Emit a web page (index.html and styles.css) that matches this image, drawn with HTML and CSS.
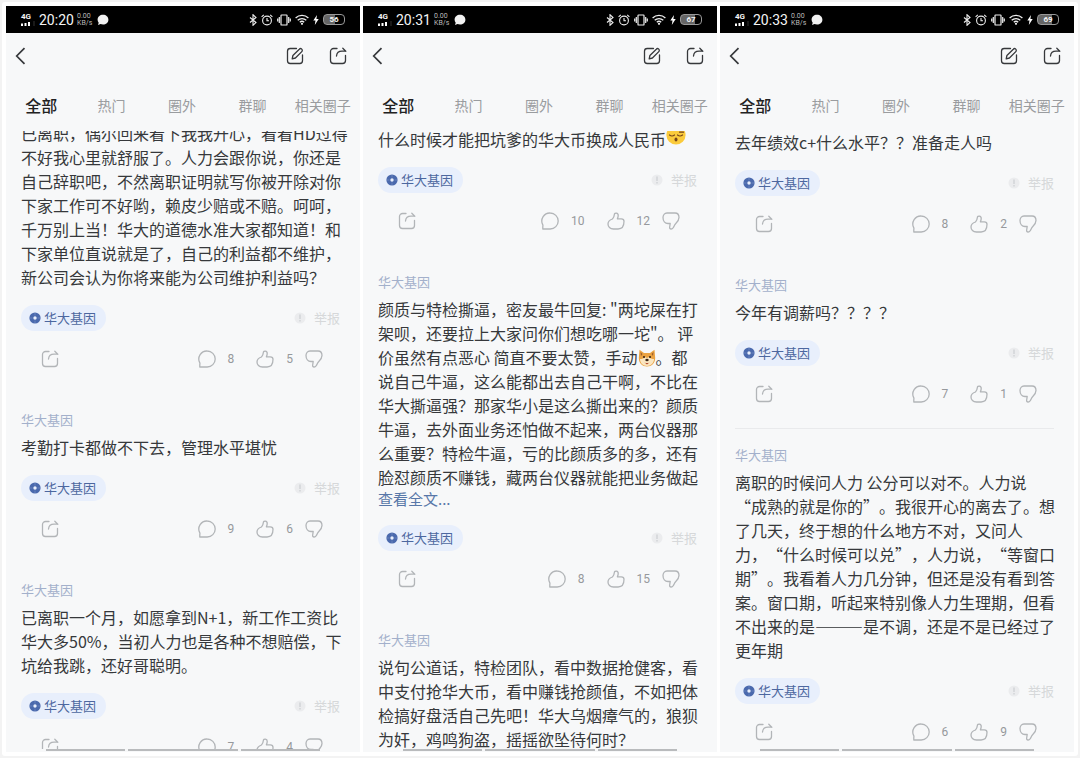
FILE: index.html
```html
<!DOCTYPE html>
<html lang="zh-CN">
<head>
<meta charset="utf-8">
<meta name="viewport" content="width=device-width, initial-scale=1">
<title>华大基因</title>
<link rel="stylesheet" href="styles.css">
</head>
<body>
<svg class="sprite" aria-hidden="true">
  <symbol id="i-signal" viewBox="0 0 14 5"><path d="M0 2.5h2V5H0zM3.5 2h2v3h-2zM7 1h2v4H7z" fill="#fff"/><path d="M12.5 0h1v5h-1z" fill="#333"/></symbol>
  <symbol id="i-bubble" viewBox="0 0 12 12"><path d="M6 .8c3 0 5.4 2.100 5.400 4.900S9 10.600 6 10.600c-.9 0-1.800-.2-2.500-.5L1 11l.7-2.300A4.700 4.700 0 0 1 .6 5.700C.6 2.900 3 .8 6 .8z" fill="#f2f2f2"/></symbol>
  <symbol id="i-bt" viewBox="0 0 8 12"><path d="M1 3.500l6 5L4 11.300V.7L7 3.500l-6 5" fill="none" stroke="#eee" stroke-width="1.100"/></symbol>
  <symbol id="i-alarm" viewBox="0 0 12 12"><g fill="none" stroke="#eee" stroke-width="1.100"><circle cx="6" cy="6.500" r="4.400"/><path d="M6 4v2.700h2M.6 2.800L2.800.8M11.400 2.800L9.200.8"/></g></symbol>
  <symbol id="i-vibrate" viewBox="0 0 14 12"><g fill="none" stroke="#eee" stroke-width="1.200"><rect x="4" y="1" width="6" height="10" rx=".6"/><path d="M2.300 3v6M.7 4.500v3M11.700 3v6M13.300 4.500v3"/></g></symbol>
  <symbol id="i-wifi" viewBox="0 0 14 11"><g fill="none" stroke="#eee" stroke-width="1.300"><path d="M.6 4a9.200 9.200 0 0 1 12.800 0M2.700 6.300a6.200 6.200 0 0 1 8.600 0M4.800 8.300a3.200 3.200 0 0 1 4.400 0"/></g><circle cx="7" cy="9.800" r="1.100" fill="#eee"/></symbol>
  <symbol id="i-bolt" viewBox="0 0 6 10"><path d="M4 0L.3 5.500h2.200L1.800 10l3.900-6H3.400z" fill="#fff"/></symbol>
  <symbol id="i-back" viewBox="0 0 11 18"><path d="M9.500 1.200L1.700 9l7.800 7.800" fill="none" stroke="currentColor" stroke-width="1.700"/></symbol>
  <symbol id="i-edit" viewBox="0 0 18 18"><g fill="none" stroke="currentColor" stroke-width="1.300" stroke-linecap="round" stroke-linejoin="round"><path d="M10.500 1.500H4.200a2.700 2.700 0 0 0-2.700 2.700v9.600a2.700 2.700 0 0 0 2.700 2.700h9.600a2.700 2.700 0 0 0 2.700-2.700V8"/><path d="M6.200 11.800l.7-3.300 6.400-6.300a1.700 1.700 0 0 1 2.500 2.400L9.400 11z"/></g></symbol>
  <symbol id="i-share" viewBox="0 0 18 18"><g fill="none" stroke="currentColor" stroke-width="1.300" stroke-linecap="round" stroke-linejoin="round"><path d="M8 1.500H4.500a3 3 0 0 0-3 3v9a3 3 0 0 0 3 3h9a3 3 0 0 0 3-3V8.500"/><path d="M7.500 9c.3-3 2.300-4.800 5.500-4.800h3.500M13.800 1.300l3 2.900"/></g></symbol>
  <symbol id="i-comment" viewBox="0 0 18 18"><path d="M9.200 1a8 8 0 1 1 0 16H1.800V14.500c.2-.6.3-.9-.1-1.900A8 8 0 0 1 9.200 1z" fill="none" stroke="currentColor" stroke-width="1.300" stroke-linejoin="round"/></symbol>
  <symbol id="i-up" viewBox="0 0 18 18"><path d="M5.400 7C6.800 5.600 7.200 4.200 7.300 2.700c.2-2.400 4-2.200 3.900.7 0 1.300-.4 2.400-.8 3.400h3.900c1.700 0 2.700 1 2.700 2.500 0 4.500-1.900 7.700-5.900 7.700H6.500C3 17 1 14.900 1 12c0-2.500 1.800-4 4.400-5z" fill="none" stroke="currentColor" stroke-width="1.300" stroke-linejoin="round"/></symbol>
  <symbol id="i-down" viewBox="0 0 18 18"><path d="M5 1h8c2.600 0 4 2 4 4.500 0 3-1.600 4.600-3.400 6.200-1 1-1.700 3-2.600 4.300-1 1.500-3.600 1.300-3.400-.5l.6-4H6C3 11.500 1 9 1 5.500 1 3 2.600 1 5 1z" fill="none" stroke="currentColor" stroke-width="1.300" stroke-linejoin="round"/></symbol>
  <symbol id="i-tag" viewBox="0 0 12 12"><circle cx="6" cy="6" r="5.600" fill="#4a69ad"/><circle cx="6" cy="6" r="1.700" fill="#e9effc"/><path d="M6 1v2.500M6 8.500V11M1 6h2.500M8.500 6H11" stroke="#6f89c0" stroke-width=".8"/></symbol>
  <symbol id="i-warn" viewBox="0 0 12 12"><circle cx="6" cy="6" r="5.500" fill="#ebecee"/><path d="M6 2.500v4.500M6 8v1.500" stroke="#d2d4d7" stroke-width="1.500"/></symbol>
  <symbol id="i-sleepy" viewBox="0 0 20 20"><circle cx="10" cy="10" r="9.600" fill="#fbcb3c"/><path d="M3.500 10q2.500 2 5 0M11.500 10q2.500 2 5 0M13.500 7.200h4" fill="none" stroke="#75451b" stroke-width="1.200" stroke-linecap="round"/><ellipse cx="10" cy="14.500" rx="1.500" ry="1.900" fill="#75451b"/></symbol>
  <symbol id="i-doge" viewBox="0 0 18 18"><path d="M1.500.8L6 4h6L16.500.8l.7 8.200c0 5-3.700 8.500-8.200 8.500S.8 14 .8 9z" fill="#eba342"/><path d="M2.500 3l2 2-1.500 2zM15.500 3l-2 2 1.500 2z" fill="#9b5d2c"/><path d="M2 10c2 0 4-.5 5-2l2 1 2-1c1 1.500 3 2 5 2 0 4-3 7-7 7s-7-3-7-7z" fill="#fae6c0"/><circle cx="6" cy="8" r="1.100" fill="#3b2617"/><circle cx="12" cy="8" r="1.100" fill="#3b2617"/><ellipse cx="9" cy="11" rx="1.700" ry="1.200" fill="#3b2617"/><path d="M6.200 13.200q2.800 1.800 5.600 0L9 15.500z" fill="#b4492f"/></symbol>
</svg>

<main class="frame">
  <section class="phone">
    <div class="status">
      <span class="network"><span>4G</span><svg class="signal"><use href="#i-signal"/></svg></span>
      <time class="clock">20:20</time>
      <span class="speed">0.00<br>KB/s</span>
      <svg class="bubble"><use href="#i-bubble"/></svg>
      <span class="sysicons">
        <svg class="bt"><use href="#i-bt"/></svg><svg class="alarm"><use href="#i-alarm"/></svg><svg class="vibrate"><use href="#i-vibrate"/></svg><svg class="wifi"><use href="#i-wifi"/></svg><svg class="bolt"><use href="#i-bolt"/></svg><span class="battery battery-half">56</span>
      </span>
    </div>
    <header class="topbar">
      <button class="icon-btn" aria-label="返回"><svg class="back"><use href="#i-back"/></svg></button>
      <button class="icon-btn push" aria-label="发帖"><svg class="icon"><use href="#i-edit"/></svg></button>
      <button class="icon-btn" aria-label="分享"><svg class="icon"><use href="#i-share"/></svg></button>
    </header>
    <nav class="tabs"><a class="tab active" href="#">全部</a><a class="tab" href="#">热门</a><a class="tab" href="#">圈外</a><a class="tab" href="#">群聊</a><a class="tab" href="#">相关圈子</a></nav>
    <div class="feed scrolled-far">
      <article class="post">
        <p class="text">已离职，偶尔回来看下我我开心，看看HD过得<br>不好我心里就舒服了。人力会跟你说，你还是<br>自己辞职吧，不然离职证明就写你被开除对你<br>下家工作可不好哟，赖皮少赔或不赔。呵呵，<br>千万别上当！华大的道德水准大家都知道！和<br>下家单位直说就是了，自己的利益都不维护，<br>新公司会认为你将来能为公司维护利益吗？</p>
        <div class="meta"><a class="tag" href="#"><svg class="dot"><use href="#i-tag"/></svg>华大基因</a><button class="report"><svg class="dot"><use href="#i-warn"/></svg>举报</button></div>
        <div class="actions"><button class="act share" aria-label="分享"><svg class="icon"><use href="#i-share"/></svg></button><button class="act"><svg class="icon"><use href="#i-comment"/></svg>8</button><button class="act"><svg class="icon"><use href="#i-up"/></svg>5</button><button class="act down" aria-label="踩"><svg class="icon"><use href="#i-down"/></svg></button></div>
      </article>
      <article class="post">
        <h2 class="author">华大基因</h2>
        <p class="text">考勤打卡都做不下去，管理水平堪忧</p>
        <div class="meta"><a class="tag" href="#"><svg class="dot"><use href="#i-tag"/></svg>华大基因</a><button class="report"><svg class="dot"><use href="#i-warn"/></svg>举报</button></div>
        <div class="actions"><button class="act share" aria-label="分享"><svg class="icon"><use href="#i-share"/></svg></button><button class="act"><svg class="icon"><use href="#i-comment"/></svg>9</button><button class="act"><svg class="icon"><use href="#i-up"/></svg>6</button><button class="act down" aria-label="踩"><svg class="icon"><use href="#i-down"/></svg></button></div>
      </article>
      <article class="post">
        <h2 class="author">华大基因</h2>
        <p class="text">已离职一个月，如愿拿到N+1，新工作工资比<br>华大多50%，当初人力也是各种不想赔偿，下<br>坑给我跳，还好哥聪明。</p>
        <div class="meta"><a class="tag" href="#"><svg class="dot"><use href="#i-tag"/></svg>华大基因</a><button class="report"><svg class="dot"><use href="#i-warn"/></svg>举报</button></div>
        <div class="actions"><button class="act share" aria-label="分享"><svg class="icon"><use href="#i-share"/></svg></button><button class="act"><svg class="icon"><use href="#i-comment"/></svg>7</button><button class="act"><svg class="icon"><use href="#i-up"/></svg>4</button><button class="act down" aria-label="踩"><svg class="icon"><use href="#i-down"/></svg></button></div>
      </article>
    </div>
    <div class="navhints"><span></span><span></span><span></span></div>
  </section>

  <section class="phone">
    <div class="status">
      <span class="network"><span>4G</span><svg class="signal"><use href="#i-signal"/></svg></span>
      <time class="clock">20:31</time>
      <span class="speed">0.00<br>KB/s</span>
      <svg class="bubble"><use href="#i-bubble"/></svg>
      <span class="sysicons">
        <svg class="bt"><use href="#i-bt"/></svg><svg class="alarm"><use href="#i-alarm"/></svg><svg class="vibrate"><use href="#i-vibrate"/></svg><svg class="wifi"><use href="#i-wifi"/></svg><svg class="bolt"><use href="#i-bolt"/></svg><span class="battery battery-most">67</span>
      </span>
    </div>
    <header class="topbar">
      <button class="icon-btn" aria-label="返回"><svg class="back"><use href="#i-back"/></svg></button>
      <button class="icon-btn push" aria-label="发帖"><svg class="icon"><use href="#i-edit"/></svg></button>
      <button class="icon-btn" aria-label="分享"><svg class="icon"><use href="#i-share"/></svg></button>
    </header>
    <nav class="tabs"><a class="tab active" href="#">全部</a><a class="tab" href="#">热门</a><a class="tab" href="#">圈外</a><a class="tab" href="#">群聊</a><a class="tab" href="#">相关圈子</a></nav>
    <div class="feed scrolled-near">
      <article class="post">
        <p class="text">什么时候才能把坑爹的华大币换成人民币<svg class="emoji raised" role="img" aria-label="困"><use href="#i-sleepy"/></svg></p>
        <div class="meta"><a class="tag" href="#"><svg class="dot"><use href="#i-tag"/></svg>华大基因</a><button class="report"><svg class="dot"><use href="#i-warn"/></svg>举报</button></div>
        <div class="actions"><button class="act share" aria-label="分享"><svg class="icon"><use href="#i-share"/></svg></button><button class="act"><svg class="icon"><use href="#i-comment"/></svg>10</button><button class="act"><svg class="icon"><use href="#i-up"/></svg>12</button><button class="act down" aria-label="踩"><svg class="icon"><use href="#i-down"/></svg></button></div>
      </article>
      <article class="post">
        <h2 class="author">华大基因</h2>
        <p class="text">颜质与特检撕逼，密友最牛回复: "两坨屎在打<br>架呗，还要拉上大家问你们想吃哪一坨"。 评<br>价虽然有点恶心 简直不要太赞，手动<svg class="emoji" role="img" aria-label="狗头"><use href="#i-doge"/></svg>。都<br>说自己牛逼，这么能都出去自己干啊，不比在<br>华大撕逼强？那家华小是这么撕出来的？颜质<br>牛逼，去外面业务还怕做不起来，两台仪器那<br>么重要？特检牛逼，亏的比颜质多的多，还有<br>脸怼颜质不赚钱，藏两台仪器就能把业务做起</p>
        <a class="more" href="#">查看全文...</a>
        <div class="meta"><a class="tag" href="#"><svg class="dot"><use href="#i-tag"/></svg>华大基因</a><button class="report"><svg class="dot"><use href="#i-warn"/></svg>举报</button></div>
        <div class="actions"><button class="act share" aria-label="分享"><svg class="icon"><use href="#i-share"/></svg></button><button class="act"><svg class="icon"><use href="#i-comment"/></svg>8</button><button class="act"><svg class="icon"><use href="#i-up"/></svg>15</button><button class="act down" aria-label="踩"><svg class="icon"><use href="#i-down"/></svg></button></div>
      </article>
      <article class="post">
        <h2 class="author">华大基因</h2>
        <p class="text">说句公道话，特检团队，看中数据抢健客，看<br>中支付抢华大币，看中赚钱抢颜值，不如把体<br>检搞好盘活自己先吧！华大乌烟瘴气的，狼狈<br>为奸，鸡鸣狗盗，摇摇欲坠待何时？</p>
      </article>
    </div>
    <div class="navhints"><span></span><span></span><span></span></div>
  </section>

  <section class="phone">
    <div class="status">
      <span class="network"><span>4G</span><svg class="signal"><use href="#i-signal"/></svg></span>
      <time class="clock">20:33</time>
      <span class="speed">0.00<br>KB/s</span>
      <svg class="bubble"><use href="#i-bubble"/></svg>
      <span class="sysicons">
        <svg class="bt"><use href="#i-bt"/></svg><svg class="alarm"><use href="#i-alarm"/></svg><svg class="vibrate"><use href="#i-vibrate"/></svg><svg class="wifi"><use href="#i-wifi"/></svg><svg class="bolt"><use href="#i-bolt"/></svg><span class="battery battery-most">69</span>
      </span>
    </div>
    <header class="topbar">
      <button class="icon-btn" aria-label="返回"><svg class="back"><use href="#i-back"/></svg></button>
      <button class="icon-btn push" aria-label="发帖"><svg class="icon"><use href="#i-edit"/></svg></button>
      <button class="icon-btn" aria-label="分享"><svg class="icon"><use href="#i-share"/></svg></button>
    </header>
    <nav class="tabs"><a class="tab active" href="#">全部</a><a class="tab" href="#">热门</a><a class="tab" href="#">圈外</a><a class="tab" href="#">群聊</a><a class="tab" href="#">相关圈子</a></nav>
    <div class="feed scrolled-start">
      <article class="post">
        <p class="text">去年绩效c+什么水平？？准备走人吗</p>
        <div class="meta"><a class="tag" href="#"><svg class="dot"><use href="#i-tag"/></svg>华大基因</a><button class="report"><svg class="dot"><use href="#i-warn"/></svg>举报</button></div>
        <div class="actions"><button class="act share" aria-label="分享"><svg class="icon"><use href="#i-share"/></svg></button><button class="act"><svg class="icon"><use href="#i-comment"/></svg>8</button><button class="act"><svg class="icon"><use href="#i-up"/></svg>2</button><button class="act down" aria-label="踩"><svg class="icon"><use href="#i-down"/></svg></button></div>
      </article>
      <article class="post divided">
        <h2 class="author">华大基因</h2>
        <p class="text">今年有调薪吗？？？？</p>
        <div class="meta"><a class="tag" href="#"><svg class="dot"><use href="#i-tag"/></svg>华大基因</a><button class="report"><svg class="dot"><use href="#i-warn"/></svg>举报</button></div>
        <div class="actions"><button class="act share" aria-label="分享"><svg class="icon"><use href="#i-share"/></svg></button><button class="act"><svg class="icon"><use href="#i-comment"/></svg>7</button><button class="act"><svg class="icon"><use href="#i-up"/></svg>1</button><button class="act down" aria-label="踩"><svg class="icon"><use href="#i-down"/></svg></button></div>
      </article>
      <article class="post">
        <h2 class="author">华大基因</h2>
        <p class="text">离职的时候问人力 公分可以对不。人力说<br>“成熟的就是你的”。我很开心的离去了。想<br>了几天，终于想的什么地方不对，又问人<br>力，“什么时候可以兑”，人力说，“等窗口<br>期”。我看着人力几分钟，但还是没有看到答<br>案。窗口期，听起来特别像人力生理期，但看<br>不出来的是———是不调，还是不是已经过了<br>更年期</p>
        <div class="meta"><a class="tag" href="#"><svg class="dot"><use href="#i-tag"/></svg>华大基因</a><button class="report"><svg class="dot"><use href="#i-warn"/></svg>举报</button></div>
        <div class="actions"><button class="act share" aria-label="分享"><svg class="icon"><use href="#i-share"/></svg></button><button class="act"><svg class="icon"><use href="#i-comment"/></svg>6</button><button class="act"><svg class="icon"><use href="#i-up"/></svg>9</button><button class="act down" aria-label="踩"><svg class="icon"><use href="#i-down"/></svg></button></div>
      </article>
    </div>
    <div class="navhints"><span></span><span></span><span></span></div>
  </section>
</main>
</body>
</html>
```

FILE: styles.css
```css
* { box-sizing: border-box; }

body {
  margin: 0;
  padding: 2px;
  background: #f3f3f3;
  font-family: "Noto Sans CJK SC", "Noto Sans", sans-serif;
  color: #36383b;
}

button {
  border: 0;
  padding: 0;
  background: none;
  font: inherit;
  color: inherit;
}

a { text-decoration: none; color: inherit; }
svg { display: block; flex: none; }
.sprite { position: absolute; width: 0; height: 0; }

.frame {
  display: flex;
  gap: 3px;
  height: calc(100vh - 4px);
  padding: 4px;
  border-radius: 3px;
  background: #fff;
}

.phone {
  display: flex;
  flex-direction: column;
  flex: 1;
  min-width: 0;
  background: #f7f8f9;
}

/* Status bar */
.status {
  display: flex;
  flex: none;
  align-items: center;
  height: 27px;
  padding: 0 15px;
  background: #000;
  color: #f4f4f4;
  font-family: Roboto, sans-serif;
}

.network {
  width: 18px;
  font-size: 8px;
  font-weight: 700;
  line-height: 8px;
}
.signal { width: 14px; height: 5px; }
.clock { width: 38px; font-size: 14px; line-height: 16px; }
.speed { width: 20px; font-size: 7px; line-height: 7px; color: #bbb; }
.bubble { width: 12px; height: 12px; }

.sysicons {
  display: flex;
  align-items: center;
  gap: 4px;
  margin-left: auto;
}
.bt { width: 8px; height: 12px; }
.alarm { width: 12px; height: 12px; }
.vibrate { width: 14px; height: 12px; }
.wifi { width: 14px; height: 11px; }
.bolt { width: 6px; height: 10px; }

.battery {
  width: 22px;
  border: 1px solid #999;
  border-radius: 4px;
  font-size: 8px;
  font-weight: 700;
  line-height: 9px;
  text-align: center;
}
.battery-half { background: linear-gradient(to right, #666 56%, #000 56%); }
.battery-most { background: linear-gradient(to right, #666 68%, #000 68%); }

/* Top bar and tabs */
.topbar {
  display: flex;
  flex: none;
  align-items: center;
  gap: 25px;
  height: 46px;
  padding: 0 13px 0 9px;
}
.push { margin-left: auto; }
.back { width: 11px; height: 18px; }
.icon { width: 18px; height: 18px; }

.tabs {
  display: grid;
  flex: none;
  grid-template-columns: repeat(5, 1fr);
  align-items: center;
  height: 52px;
  padding-right: 2px;
  text-align: center;
}
.tab { font-size: 14px; line-height: 20px; color: #9a9c9f; white-space: nowrap; }
.active { font-size: 16px; font-weight: 500; color: #222; }

/* Feed */
.feed {
  flex: 1;
  min-height: 0;
  overflow: hidden;
  padding: 0 20px 0 15px;
}
.scrolled-start .post:first-child { margin-top: -1px; }
.scrolled-near .post:first-child { margin-top: -4px; }
.scrolled-far .post:first-child { margin-top: -10px; }

.post {
  margin-bottom: 16px;
  padding-bottom: 22px;
  border-bottom: 1px solid transparent;
}
.divided { border-color: #e9eaec; }

.author {
  margin: 0 0 5px;
  font-size: 13px;
  font-weight: 400;
  line-height: 20px;
  color: #a3b0cb;
}

.text {
  margin: 0;
  font-size: 16px;
  line-height: 24px;
  white-space: nowrap;
  text-spacing-trim: space-all;
}
.emoji {
  display: inline-block;
  width: 18px;
  height: 18px;
  vertical-align: -3px;
}
.raised {
  width: 20px;
  height: 20px;
  margin-top: -6px;
  vertical-align: 1px;
}
.more { display: block; font-size: 15px; line-height: 20px; color: #5877a8; }

.meta {
  display: flex;
  align-items: center;
  justify-content: space-between;
  margin-top: 16px;
}
.tag {
  display: flex;
  align-items: center;
  gap: 3px;
  height: 26px;
  padding: 0 10px 1px 8px;
  border-radius: 13px;
  background: #e8effc;
  font-size: 13px;
  color: #4c679f;
}
.dot { width: 12px; height: 12px; }
.report {
  display: flex;
  align-items: center;
  gap: 8px;
  font-size: 13px;
  line-height: 20px;
  color: #d6d8da;
}

.actions {
  display: flex;
  align-items: center;
  height: 24px;
  margin-top: 16px;
  padding: 0 17px 0 20px;
}
.act {
  display: flex;
  align-items: center;
  gap: 12px;
  margin-left: 22px;
  font-family: Roboto, sans-serif;
  font-size: 12px;
  color: #96999c;
}
.act .icon { color: #b2b5b8; }
.share { margin: 0 auto 0 0; }
.down { margin-left: 12px; }

/* Gesture hints along the bottom edge */
.navhints {
  display: grid;
  flex: none;
  grid-template-columns: 8fr 11fr 8fr;
  gap: 3px;
  padding: 0 40px 1px;
}
.navhints span { height: 2px; background: #b9bbbd; }
```
